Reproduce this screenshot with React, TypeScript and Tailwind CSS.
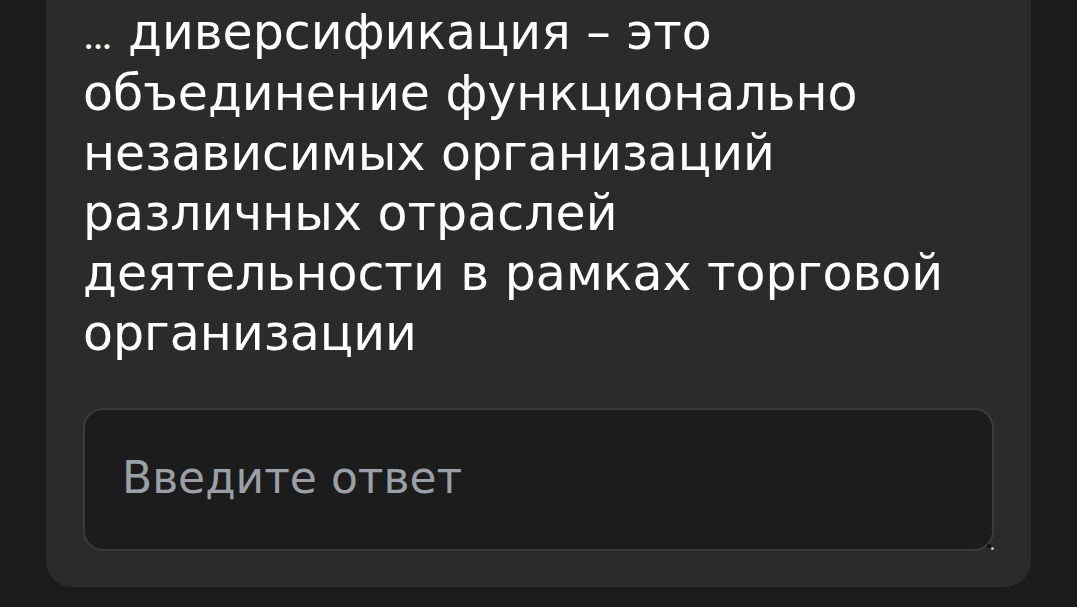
export default function App() {
  return (
    <div className="h-[607px] w-full overflow-hidden bg-[#1b1b1b] flex flex-col justify-end pb-[20px] px-[46px]" style={{ fontFamily: "'DejaVu Sans', 'Noto Sans', sans-serif" }}>
      <div className="rounded-[26px] bg-[#2b2b2b] px-[37px] pb-[36px] pt-[100px]">
        <p className="text-[49px] leading-[60px] text-white pr-[10px]">
          <span className="text-[44px] font-['Roboto']">…</span> диверсификация – это объединение функционально независимых организаций различных отраслей деятельности в рамках торговой организации
        </p>
        <div className="relative mt-[44px] h-[143px] rounded-[20px] border-2 border-[#3a3a3a] bg-[#1c1c1c] flex items-center px-[37px]">
          <input
            className="w-full bg-transparent text-[44px] text-white placeholder:text-[#9aa0a6] outline-none -mt-[4px]"
            placeholder="Введите ответ"
          />
          <span className="absolute right-[1px] bottom-[1px] h-[4px] w-[4px] rounded-full bg-[#111]" />
          <span className="absolute right-[-2px] bottom-[-1px] h-[3px] w-[3px] rounded-full bg-[#bbb]" />
        </div>
      </div>
    </div>
  );
}
